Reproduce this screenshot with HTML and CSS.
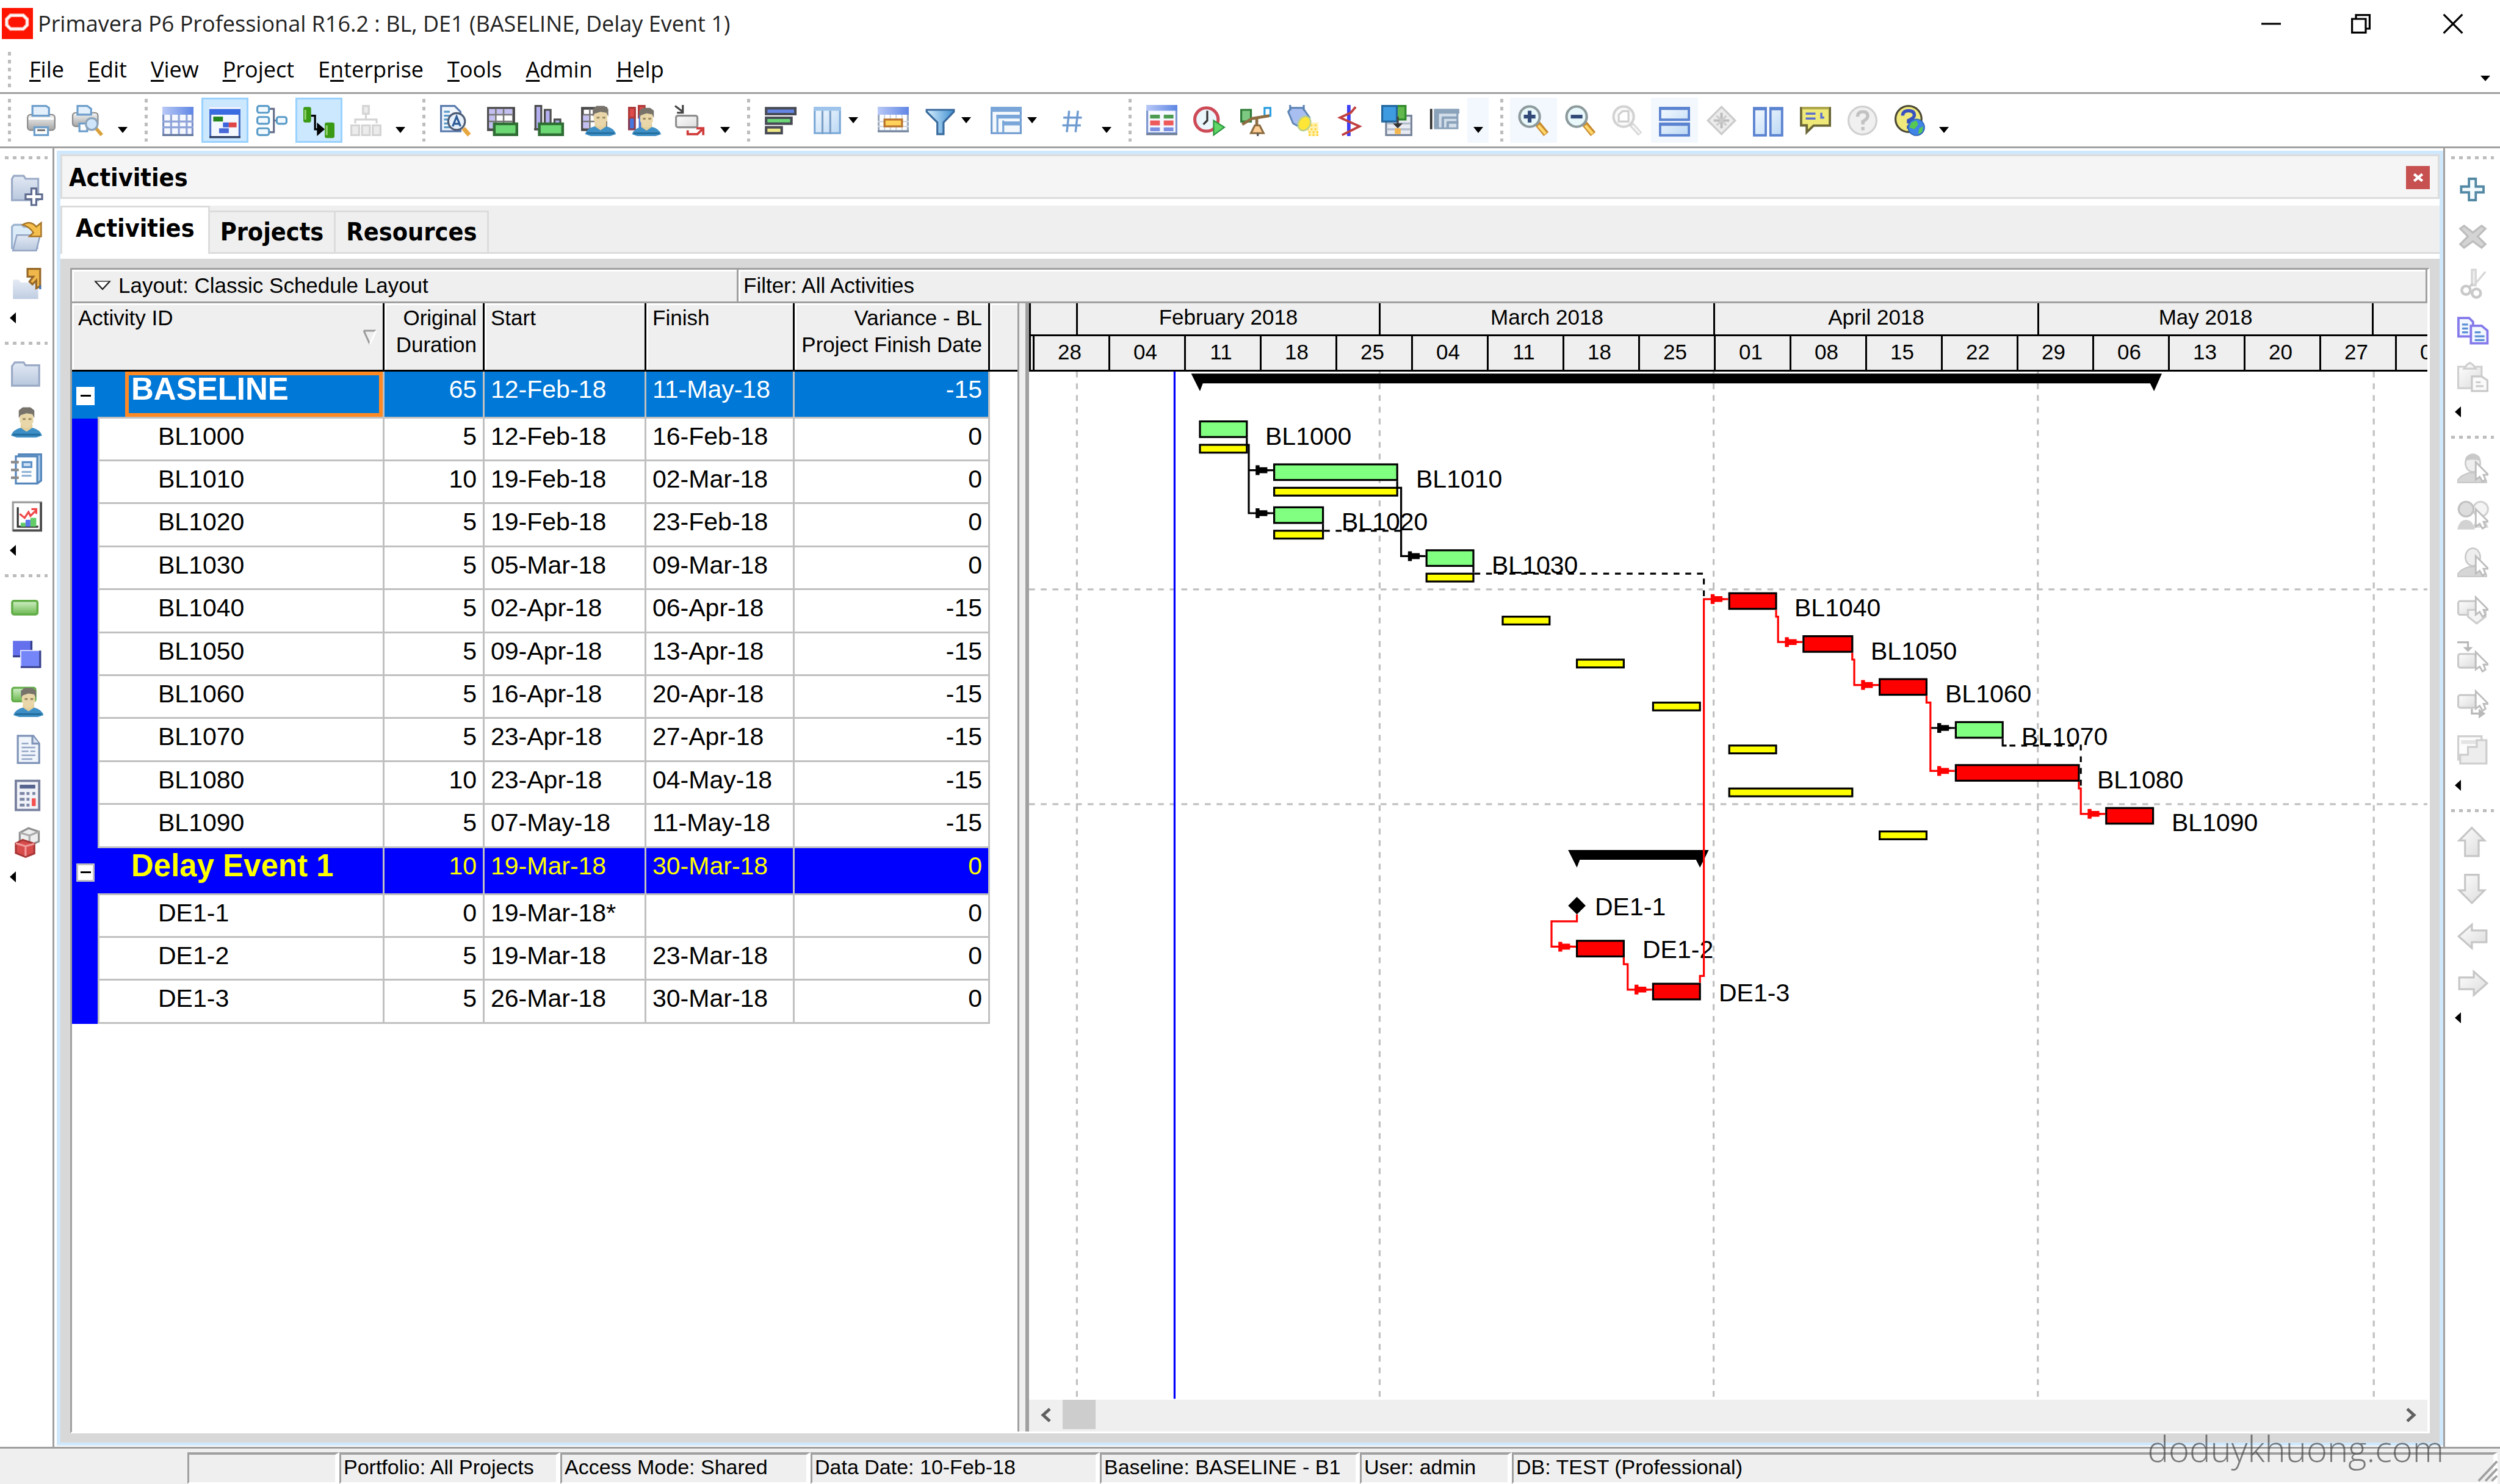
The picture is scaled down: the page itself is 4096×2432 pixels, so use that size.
FILE: index.html
```html
<!DOCTYPE html>
<html lang="en">
<head>
<meta charset="utf-8">
<title>Primavera P6 Professional R16.2 : BL, DE1 (BASELINE, Delay Event 1)</title>
<link rel="stylesheet" href="styles.css">
</head>
<body>
<svg class="defs" aria-hidden="true">
  <defs>
    <linearGradient id="blue" x1="0" y1="0" x2="1" y2="1"><stop offset="0" stop-color="#f4faff"/><stop offset="1" stop-color="#bcd8f4"/></linearGradient>
    <linearGradient id="head" x1="0" y1="0" x2="1" y2="0"><stop offset="0" stop-color="#b9c9f7"/><stop offset="1" stop-color="#5f86e4"/></linearGradient>
    <linearGradient id="gray" x1="0" y1="0" x2="0" y2="1"><stop offset="0" stop-color="#f6f6f6"/><stop offset="1" stop-color="#a4a4a4"/></linearGradient>
    <linearGradient id="pale" x1="0" y1="0" x2="1" y2="1"><stop offset="0" stop-color="#fdfdfd"/><stop offset="1" stop-color="#dcdcdc"/></linearGradient>
    <linearGradient id="green" x1="0" y1="0" x2="0" y2="1"><stop offset="0" stop-color="#d2f0c8"/><stop offset="1" stop-color="#6cb850"/></linearGradient>
    <linearGradient id="folder" x1="0" y1="0" x2="0" y2="1"><stop offset="0" stop-color="#e2e9f4"/><stop offset="1" stop-color="#b9c8de"/></linearGradient>
    <linearGradient id="funnel" x1="0" y1="0" x2="1" y2="0"><stop offset="0" stop-color="#d8f0ff"/><stop offset="1" stop-color="#3f8fd0"/></linearGradient>
  </defs>
  <symbol id="person" viewBox="0 0 16 16">
    <path d="M0 15q1-3 5-4l3-1 3 1q4 1 5 4l-3 1H3z" fill="#3d8fc6"/><path d="M1 14.500h14" stroke="#256f9f"/>
    <path d="M5 9h6v2l-3 2-3-2z" fill="#e4cf9c"/><path d="M4.500 3h7v5l-2 3h-3l-2-3z" fill="#e9d7a9"/>
    <path d="M4 6V2l2-1.500h4L12 2v4l-1-2-3-.5L5 4.500z" fill="#77736b"/><path d="M6 6.500h1.500M9 6.500h1.500" stroke="#9b8a62"/>
  </symbol>
  <symbol id="ghost" viewBox="0 0 16 16">
    <path d="M0 14q2-3 6-4h3q4 1 6 4v1H0z" fill="#d6d6d6" stroke="#c4c4c4" stroke-width=".6"/><ellipse cx="8" cy="5" rx="3.800" ry="4.500" fill="#eee" stroke="#c8c8c8" stroke-width=".8"/>
  </symbol>
  <symbol id="cursor" viewBox="0 0 16 16"><path d="M9.500 4.500v9l2-1.500 1.500 2.500 1.500-1-1-2.500h2.500z" fill="#fff" stroke="#bdbdbd" stroke-width=".9"/></symbol>
  <symbol id="lens" viewBox="0 0 16 16"><path d="M10 9.500l4.500 5.500" stroke="#c98b2c" stroke-width="3.200"/><path d="M10.500 10.500l3.700 4.300" stroke="#ffd76a" stroke-width="1.500"/><circle cx="6" cy="6" r="5.200" fill="#e9f8fb" stroke="#8c9a9c" stroke-width="1.300"/></symbol>
</svg>

<header class="titlebar">
  <svg class="logo" viewBox="0 0 16 16" aria-hidden="true"><path fill="#ff1400" d="M0 0h16v16H0z"/><path d="M4.500 3.800h6.500l2 2v3l-2 2H4.500l-2-2v-3z" fill="none" stroke="#ffc4bc" stroke-width="1.800"/><path d="M4.500 3.800h6.500l2 2v3l-2 2H4.500l-2-2v-3z" fill="none" stroke="#fff" stroke-width=".8"/></svg>
  <h1>Primavera P6 Professional R16.2 : BL, DE1 (BASELINE, Delay Event 1)</h1>
  <div class="window-buttons">
    <button aria-label="Minimize"><svg viewBox="0 0 10 10"><path d="M0 5h10"/></svg></button>
    <button aria-label="Restore"><svg viewBox="0 0 10 10"><path d="M2.500 2.500v-2h7v7h-2M.5 2.500h7v7h-7z"/></svg></button>
    <button aria-label="Close"><svg viewBox="0 0 10 10"><path d="M.2.2l9.600 9.600M9.800.2L.2 9.800"/></svg></button>
  </div>
</header>

<nav class="menubar">
  <i class="grip"></i>
  <button><u>F</u>ile</button><button><u>E</u>dit</button><button><u>V</u>iew</button><button><u>P</u>roject</button><button>E<u>n</u>terprise</button><button><u>T</u>ools</button><button><u>A</u>dmin</button><button><u>H</u>elp</button>
  <i class="menu-more"></i>
</nav>

<div class="toolbar">
  <i class="grip"></i>
  <button class="tool" aria-label="Print"><svg viewBox="0 0 16 16"><rect x="1" y="5" width="14" height="8" rx="1.500" fill="url(#gray)" stroke="#8a8a8a" stroke-width=".7"/><path d="M3.500 5.500v-5h7l1.500 1v4z" fill="#e3f0fc" stroke="#6d9ecb"/><path d="M1.500 7h13" stroke="#fff"/><path d="M4.500 11.500h7v4h-7z" fill="#fff" stroke="#6d9ecb"/><path d="M6 13h4" stroke="#777"/></svg></button>
  <button class="tool" aria-label="Print Preview"><svg viewBox="0 0 16 16"><rect x="0" y="4" width="13" height="7" rx="1.500" fill="url(#gray)" stroke="#8a8a8a" stroke-width=".7"/><path d="M2.500 5v-4.500h5l2 1.500v3z" fill="#e3f0fc" stroke="#6d9ecb"/><path d="M3.500 9.500h4v4h-4z" fill="#fff" stroke="#6d9ecb"/><path d="M12 12l3 3.500" stroke="#d9a13c" stroke-width="1.800"/><circle cx="9.800" cy="9.800" r="3" fill="#cfe6fa" stroke="#8ca4bb"/></svg></button>
  <button class="overflow" aria-label="More"></button>

  <i class="grip"></i>
  <button class="tool" aria-label="Activity Table"><svg viewBox="0 0 16 16"><path d="M.5 1.500h15v14H.5z" fill="#f5f8ff" stroke="#7d92c8"/><path d="M0 1h16v4H0z" fill="url(#head)"/><path d="M4.500 5v11M8.500 5v11M12.500 5v11M0 8.500h16M0 11.500h16" stroke="#8fa4d8"/><path d="M0 15.500h16" stroke="#65779c"/></svg></button>
  <button class="tool on" aria-label="Gantt Chart"><svg viewBox="0 0 16 16"><path d="M.5 1.500h15v15H.5z" fill="#f3f8ff" stroke="#4a70c8"/><path d="M0 1h16v4H0z" fill="#3b6be0"/><path d="M0 1h16v1H0z" fill="#fff"/><path d="M2 6h5v2.500H2z" fill="#24851f"/><path d="M7 9h3v2.500H7z" fill="#3c62dc"/><path d="M10 9h4v2.500h-4z" fill="#e04545"/><path d="M5 12h5v2.500H5z" fill="#4668d8"/><path d="M0 16.500h16" stroke="#2c3e60"/></svg></button>
  <button class="tool" aria-label="Activity Network"><svg viewBox="0 0 16 16" fill="#f3faff" stroke="#5a9cc8"><path d="M6 2h3v12H6M9 8h2" fill="none" stroke="#666f8a"/><rect x=".5" y=".5" width="6" height="3.500" rx="1"/><rect x=".5" y="6.200" width="6" height="3.500" rx="1"/><rect x=".5" y="12" width="6" height="3.500" rx="1"/><rect x="10.500" y="6.200" width="5" height="3.500" rx="1"/></svg></button>
  <button class="tool on" aria-label="Trace Logic"><svg viewBox="0 0 16 16"><rect x="0" y="1" width="4" height="8" rx="1" fill="#3a9a14"/><rect x="11" y="9" width="5" height="8" rx="1" fill="#3a9a14"/><path d="M1 2.500v5M12 10.500v5" stroke="#8fd070"/><path d="M4 5.500h2v7h2" fill="none" stroke="#000"/><path d="M7 9l4 3.500L7 16z"/></svg></button>
  <button class="tool" aria-label="WBS"><svg viewBox="0 0 16 16" fill="#ececec" stroke="#d4d4d4"><path d="M6.500.5h3v4h-3zM.5 10.500h4v5h-4zM6 10.500h4v5H6zM11.500 10.500h4v5h-4z"/><path d="M8 4.500v3M2.500 9.500v-2h11v2" fill="none"/></svg></button>
  <button class="overflow" aria-label="More"></button>

  <i class="grip"></i>
  <button class="tool" aria-label="Spell Check"><svg viewBox="0 0 16 16"><path d="M.5.500h7l3 3v10H.5z" fill="#f2f7fd" stroke="#5a7bae"/><path d="M2 3.500h3M2 5.500h3M2 7.500h2M2 9.500h2M2 11.500h3" stroke="#5b9ac8"/><path d="M12 12l3 3.500" stroke="#e7a740" stroke-width="2.200"/><circle cx="8.500" cy="8.500" r="4.300" fill="#e6f1fb" stroke="#4e5c74"/><path d="M6.500 11L8.500 6l2 5M7 9.700h3" fill="none" stroke="#2e5c98"/></svg></button>
  <button class="tool" aria-label="Activity Usage Spreadsheet"><svg viewBox="0 0 16 16"><path d="M.7 1.700h13v11H.7z" fill="#fff" stroke="#4b4b4b" stroke-width="1.400"/><path d="M1 2h12v3H1zM1 5h3v7H1z" fill="#c3bff0"/><path d="M4.500 2v10M8.500 2v10M1 5h12M1 8.500h12" stroke="#777" stroke-width=".8"/><rect x="3.700" y="9.700" width="11.600" height="5.600" fill="#6cd873" stroke="#2f6d34" stroke-width="1.400"/></svg></button>
  <button class="tool" aria-label="Activity Usage Profile"><svg viewBox="0 0 16 16"><path d="M.7.500h3v12h-3zM5.500 2.500h3v10h-3zM10.500 7.500h3v4h-3z" fill="#b4aff0" stroke="#4b4b4b"/><path d="M0 12.500h8" stroke="#4b4b4b"/><rect x="2.700" y="9.700" width="12" height="5.600" fill="#6cd873" stroke="#2f6d34" stroke-width="1.400"/></svg></button>
  <button class="tool" aria-label="Resource Usage Spreadsheet"><svg viewBox="0 0 16 16"><path d="M.7 1.700h12v11H.7z" fill="#fff" stroke="#4b4b4b" stroke-width="1.400"/><path d="M1 5h3v7H1z" fill="#c3bff0"/><path d="M4.500 2v10M1 5h12M1 8.500h12" stroke="#777" stroke-width=".8"/><use href="#person" x="2" y="0" width="16" height="16"/></svg></button>
  <button class="tool" aria-label="Resource Usage Profile"><svg viewBox="0 0 16 16"><path d="M.5 1.500h3v11h-3z" fill="#4676e0" stroke="#883c50"/><path d="M.5 1.500h3v5h-3zM5.500.5h3v6h-3z" fill="#e04c4c" stroke="#b03a3a"/><path d="M5.500 5h3v7h-3z" fill="#4676e0"/><use href="#person" x="2" y="1" width="15" height="15"/></svg></button>
  <button class="tool" aria-label="Progress Line"><svg viewBox="0 0 16 16"><path d="M0 .5l4 3M4 0v4H1" fill="none" stroke="#444"/><rect x=".5" y="5.500" width="11" height="6" rx="1" fill="url(#pale)" stroke="#8f8f8f"/><path d="M6.500 13v2h5l3-3M11 12h3.500v3.500" fill="none" stroke="#d03c3c" stroke-width="1.200"/></svg></button>
  <button class="overflow" aria-label="More"></button>

  <i class="grip"></i>
  <button class="tool" aria-label="Bars"><svg viewBox="0 0 16 16" stroke="#494c55" stroke-width="1.300"><path d="M.7 1.700h15v3H.7z" fill="#6485e6"/><path d="M.7 6.600h13v3h-13z" fill="#6bd878"/><path d="M.7 11.500h8v3h-8z" fill="#efe985"/></svg></button>
  <button class="tool split" aria-label="Columns"><svg viewBox="0 0 16 16"><path d="M1.500 1.500h13v13h-13z" fill="url(#blue)" stroke="#7ca9d8"/><path d="M1 1h14v2H1z" fill="#9fc4ec"/><path d="M5.500 3v12M9.500 3v12" stroke="#7c9fc8"/></svg><i class="caret"></i></button>
  <button class="tool" aria-label="Timescale"><svg viewBox="0 0 16 16"><path d="M.5 1.500h15v12H.5z" fill="#fff" stroke="#9aa8bd"/><path d="M0 1h16v4H0z" fill="url(#head)"/><path d="M3.500 5v8M6.500 5v8M9.500 5v8M12.500 5v8M0 8.500h16M0 11h16" stroke="#d0d6e0" stroke-width=".7"/><rect x="3.500" y="7.500" width="9" height="3.500" fill="#ffd35a" stroke="#b8722b"/><path d="M0 13.500h16" stroke="#7788a0"/></svg></button>
  <button class="tool split" aria-label="Filters"><svg viewBox="0 0 16 16"><path d="M1 2.500h14v1L9.700 9v6H6.500V9L1 3.500z" fill="url(#funnel)" stroke="#38699c"/></svg><i class="caret"></i></button>
  <button class="tool split" aria-label="Group and Sort"><svg viewBox="0 0 16 16"><path d="M.5 1.500h15v13H.5z" fill="#f4f8fd" stroke="#6f9bcf"/><path d="M0 1h16v2.500H0zM3 5h13v2H3zM6 8.500h10v2H6z" fill="#79a5d8"/><path d="M3.500 5v10M6.500 8v7" stroke="#79a5d8"/></svg><i class="caret"></i></button>
  <button class="tool" aria-label="Line Numbers"><svg viewBox="0 0 16 16"><path d="M6.500 3L5.300 14M11 3L9.800 14M3.500 6.500h9.500M3 10.500h9.500" stroke="#6f9bd0" stroke-width="1.100"/></svg></button>
  <button class="overflow" aria-label="More"></button>

  <i class="grip"></i>
  <button class="tool" aria-label="Assign Codes"><svg viewBox="0 0 16 16"><path d="M.5.500h15v14H.5z" fill="#f6f9ff" stroke="#7c96cf"/><path d="M0 0h16v3H0z" fill="url(#head)"/><path d="M2 5h5v2H2zM9 5h5v2H9z" fill="#4c9b50"/><path d="M2 8h5v2.500H2zM9 8h5v2.500H9z" fill="#ee5a5a"/><path d="M2 11.500h5v2H2zM9 11.500h5v2H9z" fill="#7c8fe0"/><path d="M0 15h16" stroke="#6c7c94"/></svg></button>
  <button class="tool" aria-label="Schedule"><svg viewBox="0 0 16 16"><circle cx="6.800" cy="7.500" r="6" fill="#eaf6fc" stroke="#cd4a57" stroke-width="1.600"/><path d="M7.200 3v5l-2 2" fill="none" stroke="#333"/><path d="M10.500 8v7.500l5.500-4z" fill="#5fd868" stroke="#2d9540" stroke-width=".7"/></svg></button>
  <button class="tool" aria-label="Level Resources"><svg viewBox="0 0 16 16"><path d="M.5 2.500h5v6h-5z" fill="#7dc983" stroke="#2d7a36"/><path d="M12.500 1.500h3v4h-3z" fill="#fff" stroke="#2a9fe0"/><path d="M1 10l5-3 9-1.500M8.500 7v5" fill="none" stroke="#8c6d42" stroke-width="1.500"/><path d="M5.500 14.500l2-4h2.500l2 4z" fill="#ffcf96" stroke="#8c6d42"/><path d="M9 14.500v1.500" stroke="#555"/></svg></button>
  <button class="tool" aria-label="Store Period Performance"><svg viewBox="0 0 16 16"><path d="M10 9h6v7h-5z" fill="#fff3b4"/><path d="M10 12.500h6M11 14h5M11 15.500h5M12 10.500h4" stroke="#ffd23c" stroke-dasharray="1 1"/><path d="M.5 3.500L2 1.500h6l3.500 5-4 5.500-4.500-2.500z" fill="#a9bef0" stroke="#5c83b4" stroke-width=".9"/><path d="M1.500 0v3M8.500 0v3" stroke="#5c83b4"/><ellipse cx="8.800" cy="9.500" rx="3" ry="3.800" transform="rotate(30 8.800 9.500)" fill="#ffe636" stroke="#b9cf86" stroke-width=".8"/></svg></button>
  <button class="tool" aria-label="Progress Spotlight"><svg viewBox="0 0 16 16"><path d="M7.500 0v16" stroke="#3d3df5" stroke-width="1.800"/><path d="M11 1L8.500 4 3 6.500l10 4.500-5 2.500L4 15.500" fill="none" stroke="#c13f3f" stroke-width="1.200"/></svg></button>
  <button class="tool" aria-label="Update Progress"><svg viewBox="0 0 16 16"><path d="M2.500 5.500h13v10h-13z" fill="#e8ebf2" stroke="#77849a"/><path d="M3 9.500h12M3 12.500h12" stroke="#b3bccb"/><path d="M7 .5h5.500v7H7z" fill="#63b84d" stroke="#2f8a2c"/><path d="M.5.500h7.500v8H.5z" fill="#3f9be0" stroke="#20669e"/><path d="M8.500 6v4" stroke="#444"/><path d="M6 9.500h5L8.500 12z" fill="#333"/><path d="M7 12h3v3H7z" fill="#f4b64c"/></svg></button>
  <button class="tool" aria-label="Summarize"><svg viewBox="0 0 16 16"><path d="M1.500 2v10.500" stroke="#333" stroke-width="1.200"/><path d="M3.500 2.500h11.500v9.500h-11.500z" fill="#d3deea" stroke="#8ba2bb"/><path d="M3 2h13v2.500H3zM3 2h2.500v10H3z" fill="#8ba2bb"/><path d="M7 6.500h8M7.500 6.500v5.500M9.500 9h6M10 9v3" stroke="#8ba2bb" stroke-width="1.300"/></svg></button>
  <button class="overflow hint" aria-label="More"></button>

  <i class="grip"></i>
  <button class="tool hint" aria-label="Zoom In"><svg viewBox="0 0 16 16"><use href="#lens"/><path d="M6 3v6M3 6h6" stroke="#324a78" stroke-width="1.900"/></svg></button>
  <button class="tool" aria-label="Zoom Out"><svg viewBox="0 0 16 16"><use href="#lens"/><path d="M3 6h6" stroke="#324a78" stroke-width="1.900"/></svg></button>
  <button class="tool" aria-label="Zoom to Fit"><svg viewBox="0 0 16 16"><path d="M10 10l4.500 5" stroke="#d8d8d8" stroke-width="2.600"/><path d="M10.500 10.500l3.700 4" stroke="#f6f6f6"/><circle cx="6" cy="6" r="5.200" fill="#fafafa" stroke="#d2d2d2" stroke-width="1.300"/><path d="M3.500 8.500V5l2-1.800h3v5.300z" fill="#fff" stroke="#cfcfcf"/></svg></button>
  <button class="tool hint" aria-label="Top and Bottom Layout"><svg viewBox="0 0 16 16" fill="url(#blue)" stroke="#5b83d0" stroke-width="1.200"><path d="M.6 1.600h14.800v6H.6zM.6 9.600h14.800v6H.6z"/><path d="M0 1.800h16M0 10h16" stroke-width="1.500"/></svg></button>
  <button class="tool" aria-label="Expand"><svg viewBox="0 0 16 16"><path d="M8 1l7 7-7 7-7-7z" fill="#ececec" stroke="#cbcbcb"/><path d="M8 4v8M4 8h8" stroke="#bdbdbd" stroke-width="1.300"/><path d="M5.500 5.500l5 5M10.500 5.500l-5 5" stroke="#ccc"/></svg></button>
  <button class="tool" aria-label="Left and Right Layout"><svg viewBox="0 0 16 16" fill="url(#blue)" stroke="#5b83d0" stroke-width="1.200"><path d="M.6 1.600h6v14h-6zM9 1.600h6v14H9z"/><path d="M0 2h7M8.500 2h7" stroke-width="1.500"/></svg></button>
  <button class="tool" aria-label="Notes"><svg viewBox="0 0 16 16"><path d="M.6 1.600h14.800v9H7L3.500 14v-3.500H.6z" fill="#efe97a" stroke="#6b6736" stroke-width="1.200"/><path d="M1 1.600h14" stroke="#b0a84c" stroke-width="1.300"/><path d="M3 4.500h5M3 7h5M11 4v2.500h1.500" fill="none" stroke="#5a6fd0" stroke-width="1.100"/></svg></button>
  <button class="tool" aria-label="Help"><svg viewBox="0 0 16 16"><circle cx="8" cy="8" r="7.200" fill="#f0f0f0" stroke="#d0d0d0"/><path d="M5.500 6q0-2.500 2.600-2.500t2.600 2.200q0 1.300-2.500 2.800v1.500M8.200 11.300v1.700" fill="none" stroke="#c2c2c2" stroke-width="1.700"/></svg></button>
  <button class="tool" aria-label="Online Help"><svg viewBox="0 0 16 16"><circle cx="7.500" cy="7.200" r="6.700" fill="#f0e97c" stroke="#4c4a36"/><path d="M4.500 5.500q0-2.500 3-2.500t3 2.300q0 1.200-3 2.700v1.500M7.500 10.500v1.700" fill="none" stroke="#3a52c0" stroke-width="1.700"/><circle cx="11.500" cy="11.500" r="4.200" fill="#3f84e6" stroke="#2b62b0" stroke-width=".5"/><path d="M9 9l2.500-1 1 2-2 2.500-2.500-1zM13 12l2-1-.5 3-2 1z" fill="#56c94e"/></svg></button>
  <button class="overflow" aria-label="More"></button>
</div>

<div class="shell">
  <aside class="rail left">
    <i class="grip"></i>
    <button class="tool" aria-label="New Project"><svg viewBox="0 0 16 16"><path d="M.5 13.500v-11l1-1.500h5l1 1.500h6.500v11z" fill="url(#folder)" stroke="#9aaac6"/><path d="M10.500 7.500h2.500v3h3v2.500h-3v3h-2.500v-3h-3v-2.500h3z" fill="#fff" stroke="#5f6c8f"/></svg></button>
    <button class="tool" aria-label="Open"><svg viewBox="0 0 16 16"><path d="M.5 14v-11l1-1h4l1 1h7v11z" fill="#dcebf8" stroke="#9cb4d0"/><path d="M1 15.300l2-8h12l-2 8z" fill="url(#folder)" stroke="#93a5c4" stroke-width=".8"/><path d="M6 2q4-2.500 7 1l2.500-2v7h-6l2-2q-2-3-5.500-4z" fill="#f4bf4c" stroke="#a9762a" stroke-width=".8"/></svg></button>
    <button class="tool" aria-label="Close"><svg viewBox="0 0 16 16"><path d="M1 6h3l1 1.500h9V16H1z" fill="url(#folder)" opacity=".9"/><path d="M8.500.5h6.500v9l-2 1v-4l-2 2-1.500-1.500 2-2.500h-3z" fill="#f0b84a" stroke="#96682a"/><path d="M15 11v-2" stroke="#3e6db0"/></svg></button>
    <button class="overflow" aria-label="More"></button>
    <i class="grip"></i>
    <button class="tool" aria-label="Projects"><svg viewBox="0 0 16 16"><path d="M.5 13.500v-10l1.500-2h4.500l1 1.500h7v10.500z" fill="url(#folder)" stroke="#9aaac6"/></svg></button>
    <button class="tool" aria-label="Resources"><svg viewBox="0 0 16 16"><use href="#person"/></svg></button>
    <button class="tool" aria-label="Reports"><svg viewBox="0 0 16 16"><path d="M4 .5h11.500V14l-2 1.500H3z" fill="#a9c8e8" stroke="#5587bd"/><path d="M2.500 1.500h11v14h-11z" fill="#fff" stroke="#5587bd"/><path d="M6 4.500h4.500v2.500H6z" fill="#cfe2f5" stroke="#5f92c8"/><path d="M5.500 9.500h5M5.500 11.500h5" stroke="#8fb2d6"/><path d="M0 4.500h4M0 8.500h4M0 12.500h4" stroke="#8b8b8b" stroke-width="1.300"/></svg></button>
    <button class="tool" aria-label="Tracking"><svg viewBox="0 0 16 16"><path d="M1 1h14.500v14.500H1z" fill="#fff" stroke="#9a9a9a"/><path d="M15.400 1v14.500H1" fill="none" stroke="#4c4c4c" stroke-width="1.200"/><path d="M3.500 3.500v10H14" fill="none" stroke="#333"/><path d="M5 11.500h2.500v2H5z" fill="#62cd68"/><path d="M7.500 10H10v3.500H7.500z" fill="#5d75ea"/><path d="M10 9h3v4.500h-3z" fill="#62cd68"/><path d="M4.500 7l2.500 2 2-3 1 2 3-3M10.500 4.500h2.500V7" fill="none" stroke="#f04848"/></svg></button>
    <button class="overflow" aria-label="More"></button>
    <i class="grip"></i>
    <button class="tool" aria-label="Activities"><svg viewBox="0 0 16 16"><rect x=".6" y="4.600" width="13" height="7" rx="1" fill="url(#green)" stroke="#62ad48" stroke-width="1.100"/></svg></button>
    <button class="tool" aria-label="WBS"><svg viewBox="0 0 16 16"><path d="M1 1h10v8H1z" fill="#6470ec"/><path d="M10.500 1v8H1" fill="none" stroke="#38408c"/><path d="M5 6h10v8.500H5z" fill="#7486f8" stroke="#dfe3ff" stroke-width=".6"/><path d="M15 6v8.500H5" fill="none" stroke="#38408c"/></svg></button>
    <button class="tool" aria-label="Assignments"><svg viewBox="0 0 16 16"><rect x=".6" y="1" width="12" height="7" rx="1" fill="url(#green)" stroke="#62ad48"/><use href="#person" x="1" y="0.500" width="16" height="15.500"/></svg></button>
    <button class="tool" aria-label="Documents"><svg viewBox="0 0 16 16"><path d="M3.500 1.500h8l3 4v10h-11z" fill="#f0f5fc" stroke="#7f94b8"/><path d="M11 1.500v4h3.500" fill="#d6e1f2" stroke="#7f94b8"/><path d="M5.500 5.500H9M5.500 7.500h7M5.500 9.500H9m1 0h2.500M5.500 11.500h7M5.500 13.500H11" stroke="#93a5c5" stroke-width=".8"/></svg></button>
    <button class="tool" aria-label="Expenses"><svg viewBox="0 0 16 16"><path d="M2.500.5h12v15h-12z" fill="#f1f3f9" stroke="#767f9d" stroke-width="1.200"/><path d="M4.500 3.500h8" stroke="#56648f" stroke-width="2"/><path d="M4.500 7H7M8 7h1.500M11 7h1.500M4.500 10H7M8 10h1.500M4.500 13H7M8 13h1.500" stroke="#7d86a6" stroke-width="1.500"/><path d="M10.700 9.500h2v4h-2z" fill="#f45050"/></svg></button>
    <button class="tool" aria-label="Risks"><svg viewBox="0 0 16 16"><path d="M4.500 3L9 .7l5.300 1.800v5L10 9.500 4.500 7.500z" fill="#eee" stroke="#8f8f8f"/><path d="M4.500 3L9.500 4.500 14.300 2.500M9.500 4.500V9" fill="none" stroke="#aaa"/><path d="M2.500 8.500L6 6.700l6 2v5L7.500 15.500l-5-2z" fill="#d84c4c" stroke="#a83636"/><path d="M2.500 8.500L7.500 10l4.500-1.300M7.500 10v5" fill="none" stroke="#f09a9a"/></svg></button>
    <button class="overflow" aria-label="More"></button>
  </aside>

  <main class="workspace">
    <header class="view-title">
      <h2>Activities</h2>
      <button class="view-close" aria-label="Close view"><svg viewBox="0 0 8 8"><path d="M1 1.500l6 5M7 1.500l-6 5"/></svg></button>
    </header>
    <nav class="tabs">
      <button class="tab current">Activities</button><button class="tab">Projects</button><button class="tab">Resources</button>
    </nav>
    <div class="frame">
      <section class="panel">
        <div class="layoutbar">
          <button class="layout-name"><svg viewBox="0 0 28 18" aria-hidden="true"><path d="M2 2h24L14 15z" fill="#fff" stroke="#666" stroke-width="2"/><path d="M2 2l12 13 12-13" fill="none" stroke="#222" stroke-width="2"/></svg>Layout: Classic Schedule Layout</button>
          <div class="filter-name">Filter: All Activities</div>
        </div>
        <div class="split-view">
          <div class="table-pane">
            <table>
              <colgroup><col class="c-bar"><col class="c-id"><col class="c-dur"><col class="c-start"><col class="c-finish"><col class="c-var"><col></colgroup>
              <thead>
                <tr><th colspan="2" class="id-head">Activity ID<svg viewBox="0 0 24 26" aria-hidden="true"><path d="M2 2h20" stroke="#999" stroke-width="3"/><path d="M2 2l10 22" stroke="#999" stroke-width="3"/><path d="M22 2L12 24" stroke="#fff" stroke-width="3"/></svg></th><th class="num">Original<br>Duration</th><th>Start</th><th>Finish</th><th class="num">Variance - BL<br>Project Finish Date</th><th class="filler"></th></tr>
              </thead>
              <tbody>
                <tr class="group selected"><td class="bar"><button aria-label="Collapse BASELINE"></button></td><td class="name"><span>BASELINE</span></td><td class="num">65</td><td>12-Feb-18</td><td>11-May-18</td><td class="num">-15</td></tr>
                <tr><td class="bar"></td><td class="id">BL1000</td><td class="num">5</td><td>12-Feb-18</td><td>16-Feb-18</td><td class="num">0</td></tr>
                <tr><td class="bar"></td><td class="id">BL1010</td><td class="num">10</td><td>19-Feb-18</td><td>02-Mar-18</td><td class="num">0</td></tr>
                <tr><td class="bar"></td><td class="id">BL1020</td><td class="num">5</td><td>19-Feb-18</td><td>23-Feb-18</td><td class="num">0</td></tr>
                <tr><td class="bar"></td><td class="id">BL1030</td><td class="num">5</td><td>05-Mar-18</td><td>09-Mar-18</td><td class="num">0</td></tr>
                <tr><td class="bar"></td><td class="id">BL1040</td><td class="num">5</td><td>02-Apr-18</td><td>06-Apr-18</td><td class="num">-15</td></tr>
                <tr><td class="bar"></td><td class="id">BL1050</td><td class="num">5</td><td>09-Apr-18</td><td>13-Apr-18</td><td class="num">-15</td></tr>
                <tr><td class="bar"></td><td class="id">BL1060</td><td class="num">5</td><td>16-Apr-18</td><td>20-Apr-18</td><td class="num">-15</td></tr>
                <tr><td class="bar"></td><td class="id">BL1070</td><td class="num">5</td><td>23-Apr-18</td><td>27-Apr-18</td><td class="num">-15</td></tr>
                <tr><td class="bar"></td><td class="id">BL1080</td><td class="num">10</td><td>23-Apr-18</td><td>04-May-18</td><td class="num">-15</td></tr>
                <tr><td class="bar"></td><td class="id">BL1090</td><td class="num">5</td><td>07-May-18</td><td>11-May-18</td><td class="num">-15</td></tr>
              </tbody>
              <tbody>
                <tr class="group"><td class="bar"><button aria-label="Collapse Delay Event 1"></button></td><td class="name"><span>Delay Event 1</span></td><td class="num">10</td><td>19-Mar-18</td><td>30-Mar-18</td><td class="num">0</td></tr>
                <tr><td class="bar"></td><td class="id">DE1-1</td><td class="num">0</td><td>19-Mar-18*</td><td></td><td class="num">0</td></tr>
                <tr><td class="bar"></td><td class="id">DE1-2</td><td class="num">5</td><td>19-Mar-18</td><td>23-Mar-18</td><td class="num">0</td></tr>
                <tr><td class="bar"></td><td class="id">DE1-3</td><td class="num">5</td><td>26-Mar-18</td><td>30-Mar-18</td><td class="num">0</td></tr>
              </tbody>
            </table>
          </div>
          <div class="splitter"></div>
          <div class="chart-pane">
            <div class="months"><span class="lead"></span><span class="d28">February 2018</span><span class="d31">March 2018</span><span class="d30">April 2018</span><span class="d31">May 2018</span><span class="rest"></span></div>
            <div class="weeks"><span>28</span><span>04</span><span>11</span><span>18</span><span>25</span><span>04</span><span>11</span><span>18</span><span>25</span><span>01</span><span>08</span><span>15</span><span>22</span><span>29</span><span>06</span><span>13</span><span>20</span><span>27</span><span>03</span></div>
            <svg class="gantt" role="img" aria-label="Gantt chart">
              <defs><path id="arrow" d="M0-2.500h2v1h4v1h1v1h-1v1h-4v1h-2z"/></defs>
              <g transform="scale(3.2) translate(-527 -190)">
                <path class="gridline" d="M551.500 190v526M706.500 190v526M877.500 190v526M1043.500 190v526M1215.500 190v526M527 301.500h716M527 411.500h716"/>
                <path class="data-date" d="M601.500 190v526"/>
                <path d="M610 191h497l-4 9-2-4H616l-1.500 4zM803 435h72l-4.500 9-2-4H809l-1.500 4zM807.500 459l4.500 4.500-4.500 4.500-4.500-4.500z"/>
                <g class="on-time">
                  <rect x="614.500" y="215.500" width="24" height="8"/><rect x="652.500" y="237.500" width="63" height="8"/><rect x="652.500" y="259.500" width="25" height="8"/><rect x="730.500" y="281.500" width="24" height="8"/><rect x="1001.500" y="369.500" width="24" height="8"/>
                </g>
                <g class="critical">
                  <rect x="885.500" y="303.500" width="24" height="8"/><rect x="923.500" y="325.500" width="25" height="8"/><rect x="962.500" y="347.500" width="24" height="8"/><rect x="1001.500" y="391.500" width="63" height="8"/><rect x="1078.500" y="413.500" width="24" height="8"/><rect x="807.500" y="481.500" width="24" height="8"/><rect x="846.500" y="503.500" width="24" height="8"/>
                </g>
                <g class="baseline-bars">
                  <rect x="614.500" y="227.500" width="24" height="4"/><rect x="652.500" y="249.500" width="63" height="4"/><rect x="652.500" y="271.500" width="25" height="4"/><rect x="730.500" y="293.500" width="24" height="4"/><rect x="769.500" y="315.500" width="24" height="4"/><rect x="807.500" y="337.500" width="24" height="4"/><rect x="846.500" y="359.500" width="24" height="4"/><rect x="885.500" y="381.500" width="24" height="4"/><rect x="885.500" y="403.500" width="63" height="4"/><rect x="962.500" y="425.500" width="24" height="4"/>
                </g>
              </g>
              <g class="labels">
                <text x="387" y="120">BL1000</text><text x="634" y="190">BL1010</text><text x="512" y="260">BL1020</text><text x="758" y="331">BL1030</text><text x="1254" y="401">BL1040</text><text x="1379" y="472">BL1050</text><text x="1501" y="542">BL1060</text><text x="1626" y="612">BL1070</text><text x="1750" y="683">BL1080</text><text x="1872" y="753">BL1090</text><text x="927" y="891">DE1-1</text><text x="1005" y="961">DE1-2</text><text x="1130" y="1032">DE1-3</text>
              </g>
              <g transform="scale(3.2) translate(-527 -190)">
                <path class="link" d="M638.500 224v3.500h1v35H652M639.500 240.500H652M715.500 246v3.500h2v35H730M677.500 268v3M754.500 290v3M988.500 372.500H1001M1025.500 378v3.500h2"/>
                <path class="link slack" d="M678 271.500h39M755 293.500h117.500v12M1029 381.500h36.500v22"/>
                <path class="link driving" d="M909.500 312v3.500h1v13H923M948.500 334v3.500h1v13H962M986.500 356v3.500h2v35H1001M1064.500 400v3.500h1v13H1078M807.500 468v3.500h-13v13H807M831.500 490v3.500h2v13H846M870.500 503v-3.500h2v-193H885"/>
                <use href="#arrow" x="643" y="240.500"/><use href="#arrow" x="643" y="262.500"/><use href="#arrow" x="721" y="284.500"/><use href="#arrow" x="992" y="372.500"/>
                <g fill="#f00"><use href="#arrow" x="876" y="306.500"/><use href="#arrow" x="914" y="328.500"/><use href="#arrow" x="953" y="350.500"/><use href="#arrow" x="992" y="394.500"/><use href="#arrow" x="1069" y="416.500"/><use href="#arrow" x="798" y="484.500"/><use href="#arrow" x="837" y="506.500"/></g>
              </g>
            </svg>
            <div class="scrollbar">
              <button aria-label="Scroll left"><svg viewBox="0 0 20 24"><path d="M16 2L5 12l11 10"/></svg></button>
              <i class="thumb"></i>
              <button class="end" aria-label="Scroll right"><svg viewBox="0 0 20 24"><path d="M4 2l11 10L4 22"/></svg></button>
            </div>
          </div>
        </div>
      </section>
    </div>
  </main>

  <aside class="rail right">
    <i class="grip"></i>
    <button class="tool" aria-label="Add"><svg viewBox="0 0 16 16"><path d="M6 2.500h3.500v4h4v3h-4v4H6v-4H2v-3h4z" fill="#f4fbfd" stroke="#5288a4" stroke-width="1.200"/></svg></button>
    <button class="tool" aria-label="Delete"><svg viewBox="0 0 16 16"><path d="M3.500 2.500L8 6l4.500-3.500 2 1.500-4 4 4 4-2 1.800L8 10.500l-4.500 3.300-2-1.800 4-4-4-4z" fill="#d4d4d4" stroke="#bdbdbd"/></svg></button>
    <button class="tool" aria-label="Cut"><svg viewBox="0 0 16 16"><path d="M7.500 1h2v8h-2zM14.500 2L9 8.500" fill="#eee" stroke="#d6d6d6"/><circle cx="4.500" cy="11.500" r="2.200" fill="none" stroke="#c9c9c9" stroke-width="1.400"/><circle cx="9.800" cy="13" r="2.200" fill="none" stroke="#c9c9c9" stroke-width="1.400"/><path d="M6 10l2-2" stroke="#c9c9c9"/></svg></button>
    <button class="tool" aria-label="Copy"><svg viewBox="0 0 16 16" fill="#f3f7ff" stroke="#8479ea" stroke-width="1.200"><path d="M.6 1.600h5.500l2 2v7.500H.6z"/><path d="M2.500 5h3M2.500 7h3M2.500 9h3" stroke="#5a8fd6" stroke-width="1"/><path d="M7 5.600h5.500l3 2.500v6.500H7z"/><path d="M9 9h3M9 11h5M9 13h5" stroke="#5a8fd6" stroke-width="1"/></svg></button>
    <button class="tool" aria-label="Paste"><svg viewBox="0 0 16 16"><path d="M.5 2.500h12v11H.5z" fill="url(#pale)" stroke="#cfcfcf"/><path d="M3.500 3.500L5 1.500 6.500.5 8 1.500l1.500 2z" fill="#f6f6f6" stroke="#cfcfcf"/><path d="M7.500 7.500h5l3 2v5.500h-8z" fill="#fafafa" stroke="#c9c9c9"/><path d="M9.500 10.500H12M9.500 12.500h4" stroke="#ccc"/></svg></button>
    <button class="overflow" aria-label="More"></button>
    <i class="grip"></i>
    <button class="tool" aria-label="Assign Resource"><svg viewBox="0 0 16 16"><use href="#ghost"/><path d="M4 4q0-3.500 4-3.500T12 4q-4-1.500-8 0z" fill="#c9c9c9"/><use href="#cursor"/></svg></button>
    <button class="tool" aria-label="Assign Resource by Role"><svg viewBox="0 0 16 16"><circle cx="12" cy="4.500" r="3.800" fill="#f4f4f4" stroke="#d2d2d2"/><path d="M8 14q1-4 4-4t4 4z" fill="#d8d8d8"/><circle cx="4.500" cy="4.500" r="3.800" fill="#ddd" stroke="#c2c2c2"/><path d="M0 15q1-5 4.500-5T9 15z" fill="#d2d2d2"/><use href="#cursor"/></svg></button>
    <button class="tool" aria-label="Assign Role"><svg viewBox="0 0 16 16"><use href="#ghost"/><use href="#cursor"/></svg></button>
    <button class="tool" aria-label="Assign Activity Code"><svg viewBox="0 0 16 16"><rect x=".5" y="3.500" width="10" height="7" rx="1" fill="url(#pale)" stroke="#c9c9c9"/><path d="M5.500 8h9v3.500L10 15l-4.500-3.500z" fill="#f4f4f4" stroke="#cdcdcd"/><use href="#cursor" y="-3"/></svg></button>
    <button class="tool" aria-label="Assign Predecessor"><svg viewBox="0 0 16 16"><path d="M0 .5h5.500v3" fill="none" stroke="#b9b9b9"/><path d="M3 3h5L5.500 5.500z" fill="#b9b9b9"/><rect x=".5" y="6.500" width="9" height="7" rx="1" fill="url(#pale)" stroke="#c9c9c9"/><use href="#cursor" y="1"/></svg></button>
    <button class="tool" aria-label="Assign Successor"><svg viewBox="0 0 16 16"><rect x=".5" y="3.500" width="9" height="6.500" rx="1" fill="url(#pale)" stroke="#c9c9c9"/><use href="#cursor" y="-3"/><path d="M7.500 10.500V13H12" fill="none" stroke="#b9b9b9"/><path d="M11 10.500v5l3.500-2.500z" fill="#b9b9b9"/></svg></button>
    <button class="tool" aria-label="Steps"><svg viewBox="0 0 16 16"><path d="M.5.500h12v12H.5z" fill="#fcfcfc" stroke="#cfcfcf"/><path d="M2 3.500h8" stroke="#e4e4e4" stroke-width="2"/><path d="M1.500 14.500v-4.500h4V6h4.500V2.500h5v12z" fill="#ededed" stroke="#cdcdcd"/></svg></button>
    <button class="overflow" aria-label="More"></button>
    <i class="grip"></i>
    <button class="tool" aria-label="Move Up"><svg viewBox="0 0 16 16"><path d="M7.500.5l6.500 6.500h-3v8H4v-8H1z" fill="url(#pale)" stroke="#c6c6c6"/></svg></button>
    <button class="tool" aria-label="Move Down"><svg viewBox="0 0 16 16"><path d="M7.500 15l6.500-6.500h-3V.5H4v8H1z" fill="url(#pale)" stroke="#c6c6c6"/></svg></button>
    <button class="tool" aria-label="Move Left"><svg viewBox="0 0 16 16"><path d="M.7 8L7.500 2v3h7.500v6H7.500v3z" fill="url(#pale)" stroke="#c6c6c6"/></svg></button>
    <button class="tool" aria-label="Move Right"><svg viewBox="0 0 16 16"><path d="M15.300 8L8.500 2v3H1v6h7.500v3z" fill="url(#pale)" stroke="#c6c6c6"/></svg></button>
    <button class="overflow" aria-label="More"></button>
  </aside>
</div>

<footer class="statusbar">
  <span class="s-empty"></span><span class="s-portfolio">Portfolio: All Projects</span><span class="s-mode">Access Mode: Shared</span><span class="s-date">Data Date: 10-Feb-18</span><span class="s-baseline">Baseline: BASELINE - B1</span><span class="s-user">User: admin</span><span class="s-db">DB: TEST (Professional)</span>
  <svg class="size-grip" viewBox="0 0 36 40" aria-hidden="true"><path d="M2 38L34 4M14 38L34 17M25 38l9-9" stroke="#a0a0a0" stroke-width="4"/></svg>
  <div class="watermark">doduykhuong.com</div>
</footer>
</body>
</html>
```
FILE: styles.css
```css
* { box-sizing: border-box; }
html, body { margin: 0; }
body {
  display: flex;
  flex-direction: column;
  min-height: 100vh;
  overflow: hidden;
  background: #fff;
  color: #000;
  font: 35px/44px "Liberation Sans", Arial, sans-serif;
}
button {
  margin: 0;
  padding: 0;
  border: 0;
  background: none;
  color: inherit;
  font: inherit;
}
svg { display: block; }
.defs { position: absolute; width: 0; height: 0; }

/* Title bar and menu */
.titlebar {
  display: flex;
  align-items: center;
  height: 77px;
  padding-left: 3px;
}
.logo { width: 51px; height: 51px; }
.titlebar h1 {
  flex: 1;
  margin: 0 0 0 8px;
  color: #222;
  font: 36px/50px "Open Sans", "Noto Sans", sans-serif;
}
.window-buttons { display: flex; }
.window-buttons button {
  display: grid;
  place-items: center;
  width: 147px;
  height: 70px;
}
.window-buttons button:last-child { width: 155px; }
.window-buttons svg {
  width: 32px;
  height: 32px;
  fill: none;
  stroke: #000;
  overflow: visible;
}
.menubar {
  display: flex;
  align-items: center;
  gap: 39px;
  height: 77px;
  border-bottom: 3px solid #a0a0a0;
  font: 36px/50px "Open Sans", "Noto Sans", sans-serif;
}
.menubar .grip { height: 58px; margin-right: -9px; }
.menubar u {
  text-decoration-thickness: 3px;
  text-underline-offset: 4px;
}
.menu-more {
  margin: 28px 16px 0 auto;
  border: 8px solid transparent;
  border-top: 9px solid #000;
  border-bottom: 0;
}

/* Toolbars */
.toolbar {
  display: flex;
  align-items: center;
  height: 89px;
  border-bottom: 3px solid #a0a0a0;
}
.grip {
  width: 5px;
  height: 70px;
  margin: 0 11px 0 19px;
  background: repeating-linear-gradient(#bdbdbd 0 6px, transparent 6px 13px);
}
.grip:first-child { margin-left: 13px; }
.tool {
  display: grid;
  place-items: center;
  width: 77px;
  height: 74px;
}
.tool > svg { width: 51px; height: 51px; overflow: visible; }
.toolbar .on { background: #cce8ff; box-shadow: inset 0 0 0 3px #99d1ff; }
.toolbar .hint { background: #f3f8fe; }
.split {
  display: flex;
  align-items: center;
  gap: 9px;
  width: 108px;
  padding-left: 13px;
}
.caret {
  border: 8px solid transparent;
  border-top: 10px solid #000;
  border-bottom: 0;
}
.overflow {
  display: grid;
  place-items: end center;
  width: 35px;
  height: 74px;
  padding-bottom: 16px;
}
.overflow::after {
  content: "";
  border: 8px solid transparent;
  border-top: 10px solid #000;
  border-bottom: 0;
}

/* Side rails */
.shell { display: flex; flex: 1; }
.rail {
  display: flex;
  flex-direction: column;
  align-items: center;
}
.rail.left { width: 89px; border-right: 3px solid #a0a0a0; }
.rail.right { width: 93px; border-left: 3px solid #a0a0a0; }
.rail .grip {
  width: 70px;
  height: 5px;
  margin: 22px 0 11px;
  background: repeating-linear-gradient(90deg, #bdbdbd 0 6px, transparent 6px 13px);
}
.rail .grip:first-child { margin-top: 13px; }
.rail .tool { height: 77px; }
.rail .overflow {
  place-items: center start;
  width: 100%;
  height: 35px;
  padding: 0 0 0 16px;
}
.rail .overflow::after {
  border: 9px solid transparent;
  border-right: 10px solid #000;
  border-left: 0;
}

/* Workspace window */
.workspace {
  display: flex;
  flex: 1;
  flex-direction: column;
  min-width: 0;
  margin: 4px 0 2px 4px;
  border: solid #cfe8fc;
  border-width: 6px 6px 5px;
}
.view-title {
  display: flex;
  align-items: center;
  justify-content: space-between;
  height: 73px;
  padding: 2px 13px 0 11px;
  border: 3px solid #dcdcdc;
  background: #f5f5f5;
}
.view-title h2, .tab {
  margin: 0;
  font: bold 41px/50px "DejaVu Sans Condensed", "DejaVu Sans", sans-serif;
}
.view-close {
  display: grid;
  place-items: center;
  width: 39px;
  height: 38px;
  background: #c75050;
}
.view-close svg { width: 18px; height: 20px; stroke: #fff; stroke-width: 2; }
.tabs {
  display: flex;
  align-items: flex-end;
  height: 79px;
  margin: 11px 0 8px;
  border-bottom: 3px solid #dcdcdc;
  background: #efefef;
}
.tab {
  height: 68px;
  padding: 0 17px 2px;
  border: solid #dcdcdc;
  border-width: 3px 3px 0 0;
}
.tab.current {
  height: 79px;
  margin-bottom: -3px;
  padding: 0 22px 8px;
  border-left-width: 3px;
  background: #fff;
}
.frame {
  display: flex;
  flex: 1;
  padding: 15px 16px;
  background: #d8d8d8;
}
.panel {
  display: flex;
  flex: 1;
  flex-direction: column;
  min-width: 0;
  border: solid #a0a0a0;
  border-width: 3px 4px 3px 3px;
  border-right-color: #fff;
  border-bottom-color: #fff;
  background: #fff;
}
.layoutbar { display: flex; height: 55px; background: #efefef; }
.layout-name, .filter-name {
  display: flex;
  align-items: center;
  border: solid #a0a0a0;
  border-width: 0 3px 3px 0;
  box-shadow: inset 3px 3px #fff;
}
.layout-name { gap: 12px; width: 1092px; padding-left: 36px; }
.layout-name svg { width: 28px; height: 18px; }
.filter-name { flex: 1; padding-left: 8px; }
.split-view { display: flex; flex: 1; }

/* Activity table */
.table-pane { width: 1552px; border-right: 3px solid #a0a0a0; }
table {
  width: 100%;
  border-spacing: 0;
  table-layout: fixed;
}
.c-bar { width: 42px; }
.c-id { width: 470px; }
.c-dur { width: 164px; }
.c-start { width: 265px; }
.c-finish { width: 243px; }
.c-var { width: 320px; }
th {
  height: 112px;
  padding: 2px 10px 0;
  border: solid #000;
  border-width: 0 3px 3px 0;
  background: #efefef;
  box-shadow: inset 3px 3px #fff;
  font-weight: normal;
  text-align: left;
  vertical-align: top;
  white-space: nowrap;
}
.id-head { position: relative; }
.id-head svg {
  position: absolute;
  right: 9px;
  bottom: 40px;
  width: 24px;
  height: 26px;
}
th.filler { border-right: 0; }
td {
  height: 70px;
  padding: 0 10px 10px;
  border: solid #c0c0c0;
  border-width: 0 3px 3px 0;
  font-size: 41px;
  white-space: nowrap;
}
tr:nth-child(5n+1) td, tr:nth-child(5n+4) td { height: 71px; }
.num, th.num, td.num { text-align: right; }
th.num, td.num { padding-left: 0; }
td.id { padding-left: 96px; border-left-width: 3px; }
td.bar { padding: 0; border: 0; background: #00f; }
tr.group td {
  height: 77px;
  padding-bottom: 17px;
  background: #00f;
  color: #ff0;
}
tr.group.selected td { background: #0078d7; color: #fff; }
tr.group td.bar { padding: 0 0 0 7px; }
.bar button {
  display: grid;
  place-items: center;
  width: 30px;
  height: 30px;
  margin-top: 2px;
  border: 3px solid #c0c0c0;
  background: #fff;
}
.selected .bar button { border-color: #fff; }
.bar button::after { content: ""; width: 17px; height: 3px; background: #000; }
tr.group td.name { padding: 0 0 0 45px; font-size: 51px; font-weight: bold; }
.name span {
  display: block;
  height: 74px;
  padding: 0 4px;
  border: 6px solid transparent;
  line-height: 46px;
}
.selected .name span { border-color: #ff8a24; }

.splitter { width: 16px; border-right: 6px solid #a0a0a0; background: #efefef; }

/* Gantt chart */
.chart-pane { display: flex; flex: 1; flex-direction: column; min-width: 0; }
.months, .weeks {
  display: flex;
  overflow: hidden;
  border: solid #000;
  border-width: 0 0 3px 3px;
  background: #efefef;
  text-align: center;
}
.months { height: 54px; line-height: 45px; }
.weeks { height: 58px; padding-left: 3px; line-height: 51px; }
.months span { flex: none; border-right: 3px solid #000; }
.months .lead { width: 77px; }
.months .d28 { width: 496px; }
.months .d30 { width: 531px; }
.months .d31 { width: 548px; }
.months .rest { border: 0; }
.weeks span { flex: none; width: 124px; padding-right: 6px; border-left: 3px solid #000; }
.gantt { flex: 1; width: 100%; overflow: hidden; }
.gridline { fill: none; stroke: #c0c0c0; stroke-dasharray: 3 3; }
.data-date { stroke: #00f; }
.on-time { fill: #80ff80; stroke: #000; }
.critical { fill: #f00; stroke: #000; }
.baseline-bars { fill: #ff0; stroke: #000; }
.labels { font-size: 41px; }
.link { fill: none; stroke: #000; }
.slack { stroke-dasharray: 3 3; }
.driving { stroke: #f00; }
.scrollbar { display: flex; height: 52px; background: #efefef; }
.scrollbar button { display: grid; place-items: center; width: 55px; padding-bottom: 3px; }
.scrollbar svg { width: 20px; height: 24px; fill: none; stroke: #606060; stroke-width: 5; }
.scrollbar .end { margin-left: auto; }
.thumb { width: 54px; height: 48px; background: #cdcdcd; }

/* Status bar */
.statusbar {
  position: relative;
  display: flex;
  height: 61px;
  padding: 6px 4px 0 307px;
  border-top: 3px solid #a0a0a0;
  background: #efefef;
  font-size: 34px;
}
.statusbar span {
  padding-left: 4px;
  border: solid #a0a0a0;
  border-width: 4px 7px 3px 3px;
  border-right-color: #fff;
  border-bottom-color: #fff;
  line-height: 41px;
  white-space: nowrap;
}
.s-empty { width: 249px; }
.s-portfolio { width: 362px; }
.s-mode { width: 410px; }
.s-date { width: 474px; }
.s-baseline { width: 426px; }
.s-user { width: 249px; }
.s-db { flex: 1; }
.size-grip { position: absolute; right: 3px; bottom: 2px; width: 34px; height: 40px; }
.watermark {
  position: absolute;
  right: 92px;
  bottom: 20px;
  color: rgba(70, 70, 70, .7);
  font: 300 58px/76px "Open Sans", "Noto Sans", sans-serif;
}
```
